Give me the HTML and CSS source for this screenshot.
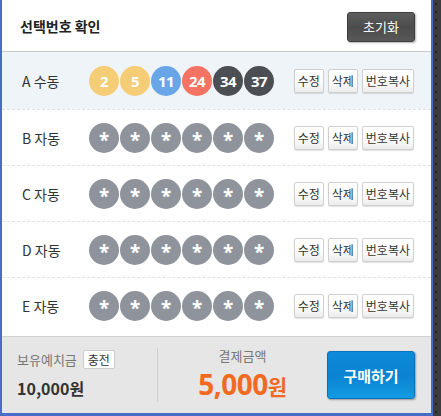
FILE: index.html
```html
<!DOCTYPE html>
<html>
<head>
  <meta charset="UTF-8">
  <meta name="viewport" content="width=device-width, initial-scale=1.0">
  <title>선택번호 확인</title>
  <link rel="stylesheet" href="styles.css">
</head>
<body>
  <div class="frame">
    <div class="head">
      <h2>선택번호 확인</h2>
      <button class="reset">초기화</button>
    </div>

    <ul class="rows">
      <li class="row active">
        <span class="name">A 수동</span>
        <div class="balls">
          <span class="ball y">2</span>
          <span class="ball y">5</span>
          <span class="ball b">11</span>
          <span class="ball r">24</span>
          <span class="ball d">34</span>
          <span class="ball d">37</span>
        </div>
        <div class="tools">
          <button>수정</button><button>삭제</button><button>번호복사</button>
        </div>
      </li>
      <li class="row">
        <span class="name">B 자동</span>
        <div class="balls">
          <span class="ball g">*</span><span class="ball g">*</span><span class="ball g">*</span>
          <span class="ball g">*</span><span class="ball g">*</span><span class="ball g">*</span>
        </div>
        <div class="tools">
          <button>수정</button><button>삭제</button><button>번호복사</button>
        </div>
      </li>
      <li class="row">
        <span class="name">C 자동</span>
        <div class="balls">
          <span class="ball g">*</span><span class="ball g">*</span><span class="ball g">*</span>
          <span class="ball g">*</span><span class="ball g">*</span><span class="ball g">*</span>
        </div>
        <div class="tools">
          <button>수정</button><button>삭제</button><button>번호복사</button>
        </div>
      </li>
      <li class="row">
        <span class="name">D 자동</span>
        <div class="balls">
          <span class="ball g">*</span><span class="ball g">*</span><span class="ball g">*</span>
          <span class="ball g">*</span><span class="ball g">*</span><span class="ball g">*</span>
        </div>
        <div class="tools">
          <button>수정</button><button>삭제</button><button>번호복사</button>
        </div>
      </li>
      <li class="row">
        <span class="name">E 자동</span>
        <div class="balls">
          <span class="ball g">*</span><span class="ball g">*</span><span class="ball g">*</span>
          <span class="ball g">*</span><span class="ball g">*</span><span class="ball g">*</span>
        </div>
        <div class="tools">
          <button>수정</button><button>삭제</button><button>번호복사</button>
        </div>
      </li>
    </ul>

    <div class="foot">
      <div class="deposit">
        <div class="label">보유예치금 <button class="charge">충전</button></div>
        <strong>10,000원</strong>
      </div>
      <div class="pay">
        <div class="label">결제금액</div>
        <strong>5,000<small>원</small></strong>
      </div>
      <button class="buy">구매하기</button>
    </div>
  </div>
</body>
</html>
```

FILE: styles.css
```css
body {
  margin: 0;
  background: #3a3c40 radial-gradient(#222 1px, transparent 1.5px);
  background-size: 8px 8px;
  font-family: "Noto Sans CJK KR", "Noto Sans", sans-serif;
  color: #333;
}
button {
  font-family: inherit;
  cursor: pointer;
}
.frame {
  width: 429px;
  height: 413px;
  background: #fff;
  border-left: 2px solid #4a6cc9;
  border-right: 2px solid #4a6cc9;
  border-bottom: 3px solid #4a6cc9;
  display: flex;
  flex-direction: column;
}
.head {
  height: 51px;
  display: flex;
  align-items: center;
  justify-content: space-between;
  padding: 0 16px 0 18px;
  border-bottom: 1px solid #c8c8c8;
}
.head h2 {
  margin: 0;
  font-size: 14px;
  font-weight: bold;
  color: #222;
}
.reset {
  width: 68px;
  height: 30px;
  margin-top: 2px;
  border: 1px solid #3c3c3c;
  border-radius: 3px;
  background: linear-gradient(#5e5e5e, #4c4c4c 50%, #585858);
  color: #fff;
  font-size: 13px;
  box-shadow: 1px 1px 2px rgba(0, 0, 0, 0.3);
}
.rows {
  list-style: none;
  margin: 0;
  padding: 0;
}
.row {
  height: 56px;
  display: flex;
  align-items: center;
  padding: 0 17px 0 20px;
}
.row + .row {
  border-top: 1px dashed #e2e2e2;
  height: 55px;
}
.row.active {
  background: #eff4f8;
  height: 57px;
}
.name {
  width: 67px;
  font-size: 14px;
  color: #333;
}
.balls {
  display: flex;
  gap: 1px;
}
.ball {
  width: 30px;
  height: 30px;
  border-radius: 50%;
  display: flex;
  align-items: center;
  justify-content: center;
  color: #fff;
  font-size: 15px;
  font-weight: bold;
  font-family: "Noto Sans", sans-serif;
  letter-spacing: -0.5px;
}
.ball.y { background: #f5cd76; }
.ball.b { background: #69a6e8; }
.ball.r { background: #f47362; }
.ball.d { background: #4b4e53; }
.ball.g {
  background: #8e939c;
  font-size: 19px;
  padding-top: 4px;
  box-sizing: border-box;
}
.tools {
  margin-left: auto;
  display: flex;
  gap: 4px;
}
.tools button {
  height: 24px;
  padding: 0 3px;
  border: 1px solid #cfcfcf;
  border-radius: 2px;
  background: linear-gradient(#fff 50%, #ececec);
  box-shadow: 0 1px 1px rgba(0, 0, 0, 0.12);
  font-size: 12px;
  font-weight: normal;
  color: #333;
}
.foot {
  margin-top: auto;
  height: 76px;
  background: #e6e6e6;
  border-top: 1px solid #d2d2d2;
  display: flex;
  align-items: center;
  padding: 0 16px 0 15px;
}
.label {
  font-size: 13px;
  color: #777;
  display: flex;
  align-items: center;
  gap: 6px;
}
.deposit {
  width: 140px;
  border-right: 1px solid #cfcfcf;
  padding: 2px 0;
}
.deposit strong {
  display: block;
  margin-top: 7px;
  font-size: 16px;
  color: #333;
}
.charge {
  height: 19px;
  padding: 0 4px;
  border: 1px solid #ccc;
  border-radius: 2px;
  background: #fff;
  font-size: 12px;
  color: #333;
}
.pay {
  flex: 1;
  text-align: center;
}
.pay .label {
  justify-content: center;
}
.pay strong {
  display: block;
  font-size: 28px;
  line-height: 38px;
  color: #f26a22;
  font-family: "Noto Sans", "Noto Sans CJK KR", sans-serif;
  letter-spacing: -0.5px;
}
.pay small {
  font-size: 21px;
  font-family: "Noto Sans CJK KR", sans-serif;
}
.buy {
  width: 88px;
  height: 48px;
  border: 1px solid #0a73bd;
  border-radius: 3px;
  background: linear-gradient(#0c8ad9, #0a83d2 50%, #129be2);
  color: #fff;
  font-size: 15px;
  font-weight: bold;
  box-shadow: 1px 1px 2px rgba(0, 0, 0, 0.35);
}
```
